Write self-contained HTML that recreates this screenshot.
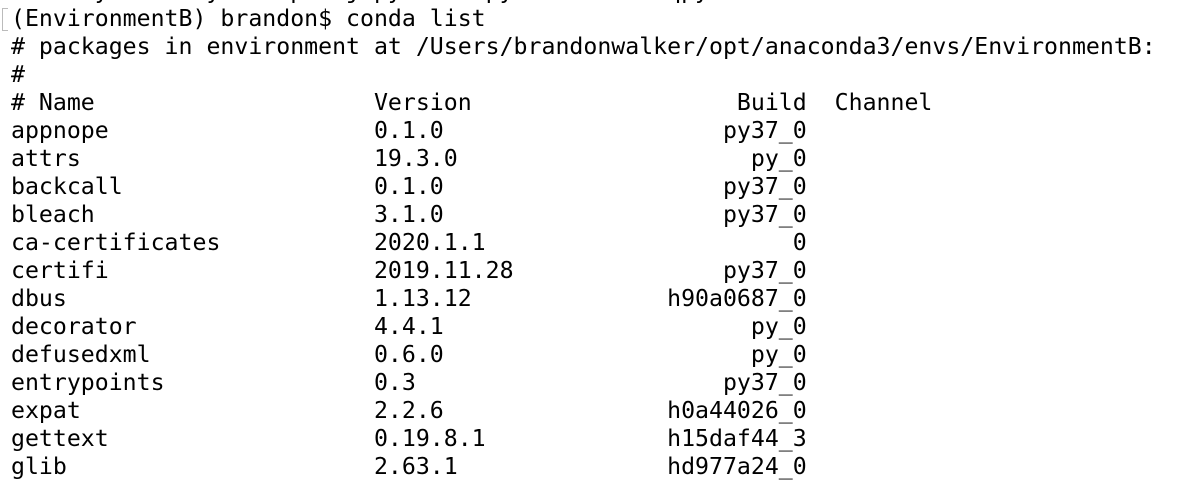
<!DOCTYPE html>
<html><head><style>
html,body{margin:0;padding:0;background:#fff;width:1180px;height:482px;overflow:hidden}
pre{position:absolute;left:11px;top:-23px;margin:0;font-family:"DejaVu Sans Mono","Liberation Mono",monospace;font-size:23.2px;line-height:28px;color:#000}
.b{position:absolute;left:2px;top:8px;width:5px;height:21px;border:1px solid #bbb;border-right:none}
</style></head><body>
<div class="b"></div>
<pre>    stylish  ayi   ap   jupyter   py  install  qpy
(EnvironmentB) brandon$ conda list
# packages in environment at /Users/brandonwalker/opt/anaconda3/envs/EnvironmentB:
#
# Name                    Version                   Build  Channel
appnope                   0.1.0                    py37_0
attrs                     19.3.0                     py_0
backcall                  0.1.0                    py37_0
bleach                    3.1.0                    py37_0
ca-certificates           2020.1.1                      0
certifi                   2019.11.28               py37_0
dbus                      1.13.12              h90a0687_0
decorator                 4.4.1                      py_0
defusedxml                0.6.0                      py_0
entrypoints               0.3                      py37_0
expat                     2.2.6                h0a44026_0
gettext                   0.19.8.1             h15daf44_3
glib                      2.63.1               hd977a24_0
</pre>
</body></html>
